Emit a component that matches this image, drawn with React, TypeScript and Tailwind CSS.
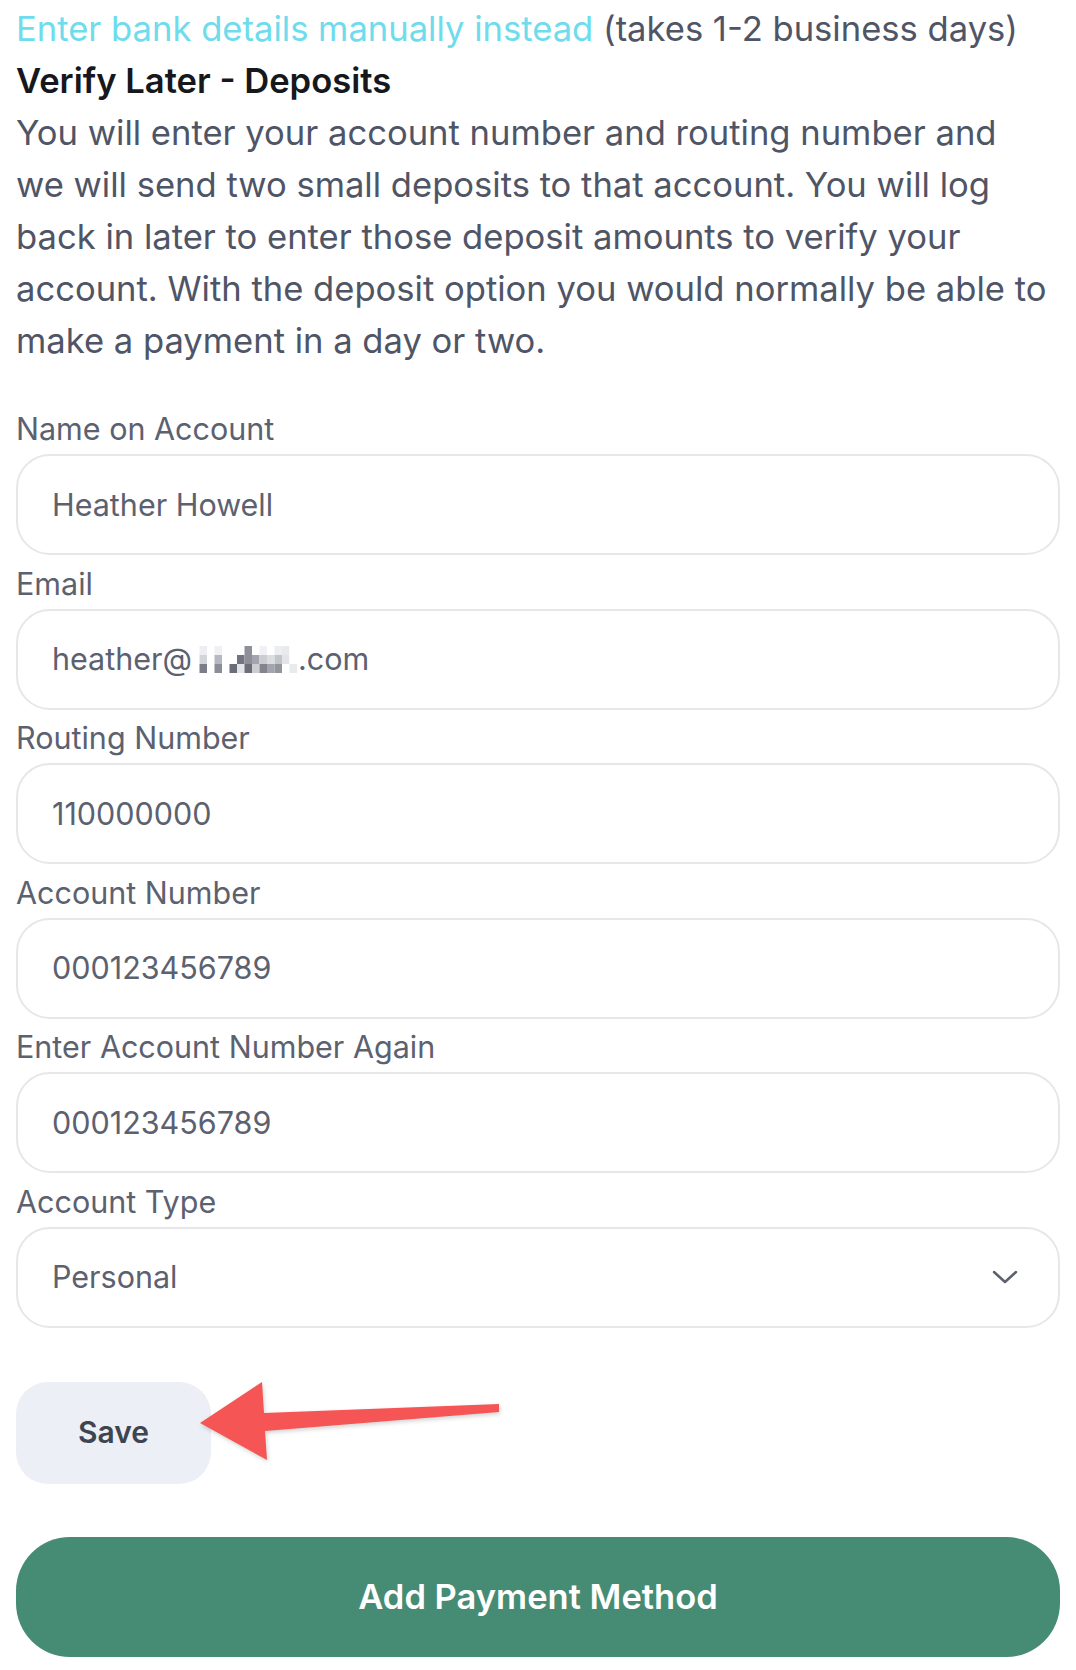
import React from 'react';

const MOSAIC: string[][] = [
  ['#fff', '#eceef2', '#fff', '#eef0f3', '#fff', '#fff', '#fff', '#8d9099', '#fff', '#f0f1f4', '#fff', '#eceef2', '#e8eaee', '#fff', '#fff'],
  ['#fff', '#d3d5db', '#fff', '#b7b9c0', '#fff', '#fff', '#72757f', '#8d9099', '#a2a5ad', '#cbcdd3', '#dbdde2', '#c3c5cb', '#e2e4e8', '#fff', '#fff'],
  ['#fff', '#7b7e88', '#fff', '#8b8e97', '#fff', '#6b6e78', '#e2e4e8', '#6b6e78', '#cbcdd3', '#82858e', '#a2a5ad', '#92959c', '#fff', '#e8eaee', '#fff'],
];

const Mosaic = () => (
  <svg width="106" height="27" viewBox="0 0 106 27" className="inline-block align-middle">
    {MOSAIC.map((row, r) =>
      row.map((c, i) => <rect key={`${r}-${i}`} x={i * 7.5} y={r * 9} width="7.5" height="9" fill={c} />)
    )}
  </svg>
);

const Field = ({ label, children }: { label: string; children: React.ReactNode }) => (
  <div className="flex flex-col">
    <label className="text-[30.5px] leading-[36px] text-[#5c6170] mb-[7px]">{label}</label>
    {children}
  </div>
);

const inputBox =
  'h-[101px] w-full rounded-[34px] border-2 border-[#e6e7ea] bg-white px-[34px] flex items-center text-[30.5px] text-[#5c6170]';

export default function App() {
  return (
    <div className="relative min-h-[1670px] bg-white px-4 pt-[2px] font-['Inter',sans-serif]">
      <div className="text-[34.6px] leading-[52px] whitespace-nowrap">
        <p className="text-[#4f5566]">
          <span className="text-[#6edcec]">Enter bank details manually instead</span> (takes 1-2 business days)
        </p>
        <h2 className="font-semibold text-[#16181d]">Verify Later - Deposits</h2>
        <p className="text-[#4f5566]">
          You will enter your account number and routing number and
          <br />
          we will send two small deposits to that account. You will log
          <br />
          back in later to enter those deposit amounts to verify your
          <br />
          account. With the deposit option you would normally be able to
          <br />
          make a payment in a day or two.
        </p>
      </div>

      <div className="mt-[45px] flex flex-col gap-[10.5px]">
        <Field label="Name on Account">
          <div className={inputBox}>Heather Howell</div>
        </Field>
        <Field label="Email">
          <div className={inputBox}>
            <span>heather@</span>
            <Mosaic />
            <span>.com</span>
          </div>
        </Field>
        <Field label="Routing Number">
          <div className={inputBox}>110000000</div>
        </Field>
        <Field label="Account Number">
          <div className={inputBox}>000123456789</div>
        </Field>
        <Field label="Enter Account Number Again">
          <div className={inputBox}>000123456789</div>
        </Field>
        <Field label="Account Type">
          <div className={`${inputBox} justify-between pr-[40px]`}>
            <span>Personal</span>
            <svg width="26" height="14" viewBox="0 0 26 14" fill="none">
              <path d="M2 2l11 10L24 2" stroke="#5c616e" strokeWidth="2.5" strokeLinecap="round" strokeLinejoin="round" />
            </svg>
          </div>
        </Field>
      </div>

      <button className="mt-[54px] h-[102px] w-[195px] rounded-[32px] bg-[#eceff5] text-[30px] font-semibold text-[#3f4451]">
        Save
      </button>

      <button className="mt-[53px] block h-[120px] w-full rounded-[54px] bg-[#468b73] text-[34.5px] font-semibold text-white">
        Add Payment Method
      </button>

      {/* annotation arrow pointing at Save */}
      <svg
        className="absolute left-0 top-0 pointer-events-none"
        width="520"
        height="1500"
        viewBox="0 0 520 1500"
        style={{ filter: 'drop-shadow(1px 2px 2px rgba(0,0,0,0.18))' }}
      >
        <path d="M200 1423 L262 1382 L264 1413 L499 1404 L499 1412 L265 1431 L267 1460 Z" fill="#f55554" />
      </svg>
    </div>
  );
}
